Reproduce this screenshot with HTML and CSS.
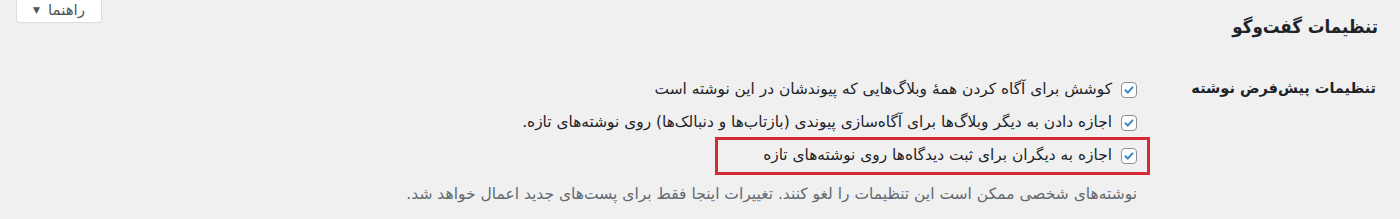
FILE: index.html
```html
<!DOCTYPE html>
<html lang="fa" dir="rtl">
<head>
  <meta charset="UTF-8">
  <title>تنظیمات گفت‌وگو</title>
  <link rel="stylesheet" href="styles.css">
</head>
<body>

<div class="top">
  <h1>تنظیمات گفت‌وگو</h1>
  <button class="help-tab" type="button">راهنما <span class="arrow">▼</span></button>
</div>

<div class="form-row">
  <div class="row-label">تنظیمات پیش‌فرض نوشته</div>
  <div class="row-field">
    <!-- گزینه‌ها -->
    <label class="opt">
      <span class="box"><svg viewBox="0 0 16 16" width="16" height="16"><path d="M4 8.3l2.6 2.7L12 5" fill="none" stroke="#3582c4" stroke-width="2.2" stroke-linecap="round" stroke-linejoin="round"/></svg></span>
      کوشش برای آگاه کردن همهٔ وبلاگ‌هایی که پیوندشان در این نوشته است
    </label>
    <label class="opt">
      <span class="box"><svg viewBox="0 0 16 16" width="16" height="16"><path d="M4 8.3l2.6 2.7L12 5" fill="none" stroke="#3582c4" stroke-width="2.2" stroke-linecap="round" stroke-linejoin="round"/></svg></span>
      اجازه دادن به دیگر وبلاگ‌ها برای آگاه‌سازی پیوندی (بازتاب‌ها و دنبالک‌ها) روی نوشته‌های تازه.
    </label>
    <label class="opt marked">
      <span class="box"><svg viewBox="0 0 16 16" width="16" height="16"><path d="M4 8.3l2.6 2.7L12 5" fill="none" stroke="#3582c4" stroke-width="2.2" stroke-linecap="round" stroke-linejoin="round"/></svg></span>
      اجازه به دیگران برای ثبت دیدگاه‌ها روی نوشته‌های تازه
    </label>
    <p class="description">نوشته‌های شخصی ممکن است این تنظیمات را لغو کنند. تغییرات اینجا فقط برای پست‌های جدید اعمال خواهد شد.</p>
  </div>
</div>

</body>
</html>
```

FILE: styles.css
```css
/* === پایه === */
body {
  margin: 0;
  background: #f0f0f1;
  color: #1d2327;
  font-family: "DejaVu Sans", "Noto Sans", sans-serif;
  font-size: 15.4px;
  line-height: 1.4;
}

/* === سربرگ: عنوان + دکمه راهنما === */
.top {
  display: flex;
  justify-content: space-between;
  align-items: flex-start;
  padding: 0 22px 0 16px;
  height: 42px;
}

h1 {
  margin: 13px 0 0;
  font-family: "DejaVu Sans Condensed", "DejaVu Sans", sans-serif;
  font-size: 18.5px;
  font-weight: bold;
  line-height: 28px;
}

.help-tab {
  width: 86px;
  height: 23px;
  padding: 0 10px 2px;
  border: 1px solid #dcdcde;
  border-top: none;
  border-radius: 0 0 4px 4px;
  background: #fff;
  color: #50575e;
  font-family: inherit;
  font-size: 15px;
  line-height: 20px;
  display: flex;
  align-items: center;
  justify-content: center;
  gap: 8px;
}

.help-tab .arrow {
  font-size: 9px;
  color: #50575e;
}

/* === ردیف تنظیمات === */
.form-row {
  display: flex;
  margin: 38px 24px 0 0;
}

.row-label {
  width: 239px;
  flex-shrink: 0;
  margin-top: -2px;
  font-size: 14.5px;
  font-weight: bold;
  line-height: 20px;
}

.row-field {
  display: flex;
  flex-direction: column;
  align-items: flex-start; /* راست در rtl */
}

.opt {
  display: inline-flex;
  align-items: center;
  gap: 9px;
  height: 20px;
  margin-bottom: 13px;
}

.box {
  width: 16px;
  height: 16px;
  flex-shrink: 0;
  box-sizing: border-box;
  border: 1px solid #8c8f94;
  border-radius: 4px;
  background: #fff;
  display: flex;
  align-items: center;
  justify-content: center;
}

.box svg {
  width: 14px;
  height: 14px;
}

/* کادر قرمز دور گزینه سوم */
.opt.marked {
  padding: 0 4px 0 39px;
  margin-right: -4px;
  outline: 3px solid #d72a33;
  outline-offset: 6px;
}

.description {
  margin: 5px 0 0;
  color: #646970;
  font-size: 15.5px;
}
```
